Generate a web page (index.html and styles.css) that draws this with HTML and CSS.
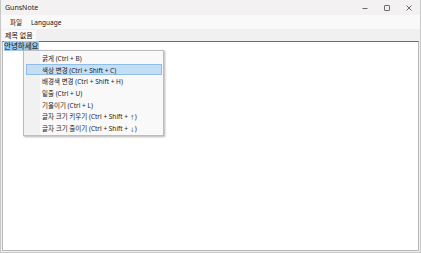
FILE: index.html
```html
<!DOCTYPE html>
<html lang="ko">
  <head>
    <meta charset="UTF-8" />
    <title>GunsNote</title>
    <link rel="stylesheet" href="styles.css">
  </head>
  <body>
    <div class="window">
      <div class="titlebar">
        <span class="title">GunsNote</span>
        <div class="controls">
          <span class="ctl">
            <svg width="10" height="10" viewBox="0 0 10 10"><path d="M2.5 5.5h5" stroke="#444" stroke-width="0.8"/></svg>
          </span>
          <span class="ctl">
            <svg width="10" height="10" viewBox="0 0 10 10"><rect x="2.5" y="2.5" width="5" height="5" rx="0.6" fill="none" stroke="#444" stroke-width="0.8"/></svg>
          </span>
          <span class="ctl">
            <svg width="10" height="10" viewBox="0 0 10 10"><path d="M2.5 2.5l5 5M7.5 2.5l-5 5" stroke="#444" stroke-width="0.8"/></svg>
          </span>
        </div>
      </div>
      <div class="menubar">
        <span class="menu-item">파일</span>
        <span class="menu-item">Language</span>
      </div>
      <div class="tabs">
        <span class="tab">제목 없음</span>
      </div>
      <div class="editor">
        <span class="selected">안녕하세요</span>
        <ul class="context-menu">
          <li>굵게 (Ctrl + B)</li>
          <li class="hover">색상 변경 (Ctrl + Shift + C)</li>
          <li>배경색 변경 (Ctrl + Shift + H)</li>
          <li>밑줄 (Ctrl + U)</li>
          <li>기울이기 (Ctrl + L)</li>
          <li>글자 크기 키우기 (Ctrl + Shift + <span class="arrow">↑</span>)</li>
          <li>글자 크기 줄이기 (Ctrl + Shift + <span class="arrow">↓</span>)</li>
        </ul>
      </div>
    </div>
  </body>
</html>
```

FILE: styles.css
```css
* {
  margin: 0;
  padding: 0;
  box-sizing: border-box;
  font-family: "Noto Sans", "Noto Sans CJK KR", sans-serif;
}
html,
body {
  width: 421px;
  height: 253px;
  overflow: hidden;
  background-color: #f0f0f0;
}
.window {
  display: flex;
  flex-direction: column;
  height: 253px;
  border: 1px solid #c8c8c8;
  border-top: none;
}
.titlebar {
  height: 15px;
  display: flex;
  align-items: center;
  justify-content: space-between;
  background-color: #f3f1f2;
  padding-left: 4px;
}
.title {
  font-size: 7px;
  color: #222;
}
.controls {
  display: flex;
  height: 100%;
}
.ctl {
  width: 22px;
  display: flex;
  align-items: center;
  justify-content: center;
}
.menubar {
  height: 14px;
  display: flex;
  align-items: center;
  background-color: #f9f9f9;
  padding-left: 4px;
}
.menu-item {
  font-size: 6.5px;
  color: #111;
  padding: 0 4px 0 5px;
}
.tabs {
  height: 12px;
  display: flex;
  align-items: flex-end;
  background-color: #f0f0f0;
  padding-left: 1px;
}
.tab {
  font-size: 7px;
  color: #111;
  padding: 0 3px;
  line-height: 11px;
  background-color: #fafafa;
}
.editor {
  position: relative;
  flex: 1;
  margin: 0 1px 1px 1px;
  background-color: #fff;
  border: 1px solid #b8b8b8;
  border-top: 1px solid #6e6e6e;
  padding: 0 1px;
  font-size: 7.5px;
  line-height: 9px;
}
.selected {
  background-color: #99c9ef;
  color: #111;
}
.context-menu {
  position: absolute;
  left: 20px;
  top: 8px;
  width: 141px;
  list-style: none;
  background: linear-gradient(to right, #f1f1f1 0, #f1f1f1 16px, #f9f9f9 16px);
  border: 1px solid #bdbdbd;
  box-shadow: 1px 1px 2px rgba(0, 0, 0, 0.3);
  padding: 1px 1px 1px 2px;
}
.context-menu li {
  font-size: 6.5px;
  color: #222;
  height: 11.7px;
  line-height: 11px;
  padding-left: 15px;
  border: 1px solid transparent;
}
.context-menu li.hover {
  background-color: #c4def5;
  border-color: #8fbde6;
}
.arrow {
  font-size: 5px;
}
```
